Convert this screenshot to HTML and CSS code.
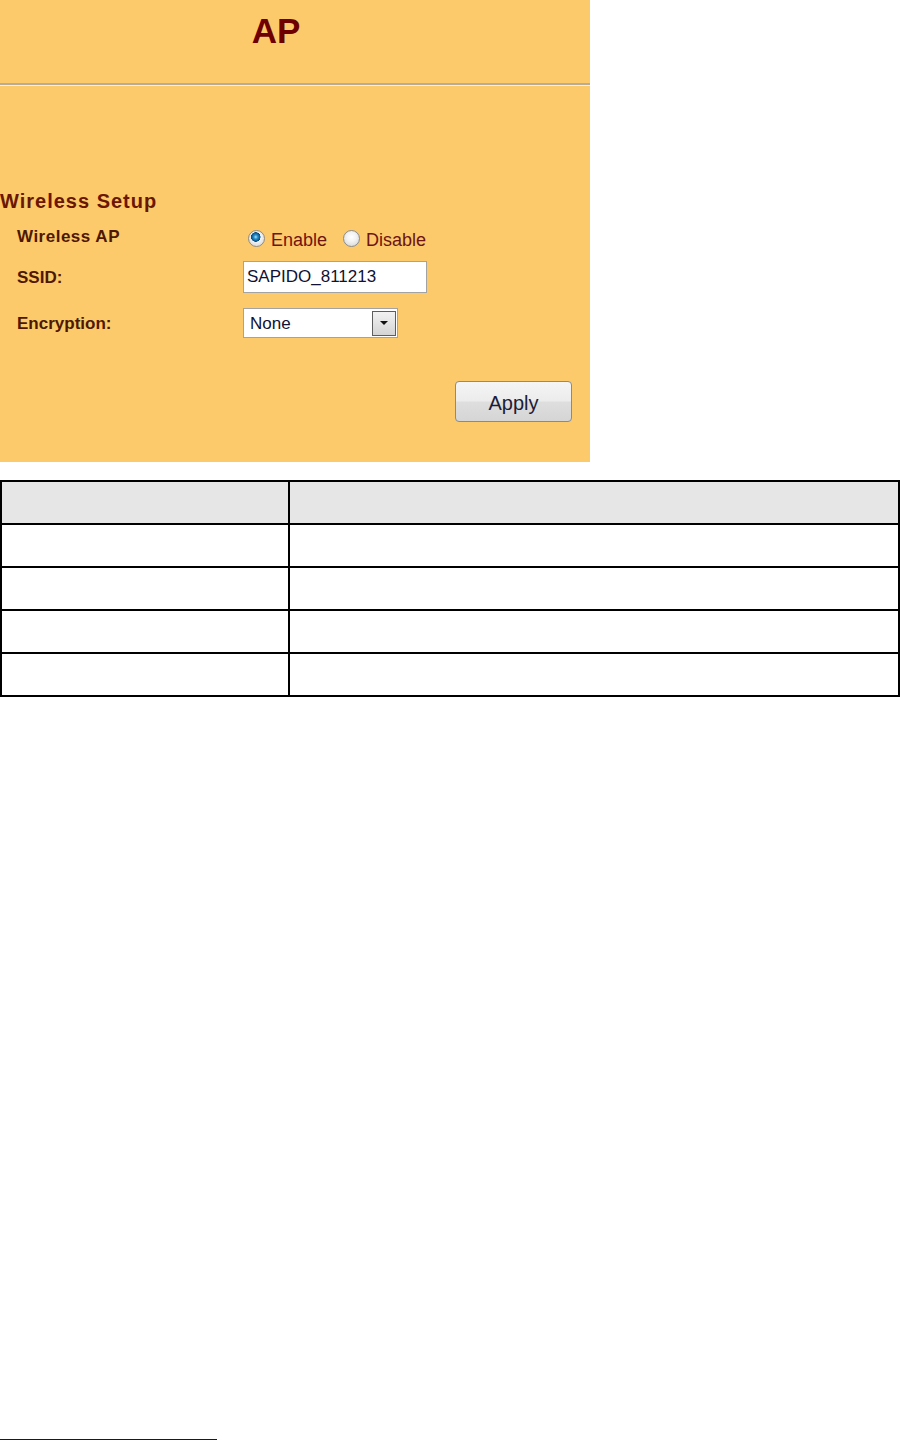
FILE: index.html
```html
<!DOCTYPE html>
<html lang="en">

<head>
    <meta charset="UTF-8">
    <meta name="viewport" content="width=device-width, initial-scale=1.0">
    <title>AP - Wireless Setup</title>
    <link rel="stylesheet" href="styles.css">
</head>

<body>
    <div class="panel">
        <div class="panel-head">
            <h1>AP</h1>
        </div>
        <hr class="divider">

        <h2 class="section-title">Wireless Setup</h2>

        <div class="form-row first-row">
            <label class="field-label">Wireless AP</label>
            <div class="radios">
                <input type="radio" name="ap" id="apOn" checked>
                <label for="apOn">Enable</label>
                <input type="radio" name="ap" id="apOff" class="second">
                <label for="apOff">Disable</label>
            </div>
        </div>

        <div class="form-row ssid-row">
            <label class="field-label" for="ssid">SSID:</label>
            <input type="text" id="ssid" class="text-input" value="SAPIDO_811213">
        </div>

        <div class="form-row enc-row">
            <label class="field-label" for="enc">Encryption:</label>
            <div class="select-box">
                <select id="enc">
                    <option>None</option>
                    <option>WEP</option>
                    <option>WPA</option>
                </select>
                <span class="arrow"></span>
            </div>
        </div>

        <div class="button-row">
            <button class="apply-button">Apply</button>
        </div>
    </div>

    <table class="info-table">
        <tr>
            <th class="col-name"></th>
            <th></th>
        </tr>
        <tr>
            <td></td>
            <td></td>
        </tr>
        <tr>
            <td></td>
            <td></td>
        </tr>
        <tr>
            <td></td>
            <td></td>
        </tr>
        <tr>
            <td></td>
            <td></td>
        </tr>
    </table>

    <div class="footnote-rule"></div>
</body>

</html>
```

FILE: styles.css
```css
body {
    margin: 0;
    min-height: 100vh;
    display: flex;
    flex-direction: column;
    background: #fff;
    font-family: 'Liberation Sans', Arial, sans-serif;
}

.panel {
    width: 590px;
    height: 462px;
    box-sizing: border-box;
    background-color: #fcca6a;
}

.panel-head {
    height: 83px;
    box-sizing: border-box;
    padding-top: 11px;
    padding-right: 38px;
    text-align: center;
}

.panel-head h1 {
    margin: 0;
    font-size: 35px;
    line-height: 40px;
    font-weight: bold;
    color: #6e0000;
}

.divider {
    margin: 0;
    height: 0;
    border: none;
    border-top: 2px solid #b5aca0;
    border-bottom: 1px solid #f3ede2;
}

.section-title {
    margin: 103px 0 0 0;
    font-size: 20px;
    line-height: 24px;
    font-weight: bold;
    letter-spacing: 1px;
    color: #6a1600;
}

.form-row {
    display: flex;
    align-items: center;
    padding-left: 17px;
}

.first-row {
    align-items: flex-start;
    margin-top: 13px;
}

.ssid-row {
    margin-top: 11px;
}

.enc-row {
    margin-top: 15px;
}

.field-label {
    width: 226px;
    flex-shrink: 0;
    font-size: 17px;
    line-height: 20px;
    font-weight: bold;
    color: #4e1800;
}

.first-row .field-label {
    padding-top: 1px;
    letter-spacing: 0.5px;
}

.ssid-row .field-label,
.enc-row .field-label {
    padding-top: 2px;
}

.radios {
    display: flex;
    align-items: center;
    margin-top: 4px;
    font-size: 18px;
    line-height: 20px;
    color: #6e1414;
}

.radios input {
    appearance: none;
    -webkit-appearance: none;
    width: 17px;
    height: 17px;
    margin: -3px 6px 0 5px;
    border: 1px solid #8c8c8c;
    border-radius: 50%;
    box-sizing: border-box;
    background: radial-gradient(circle at 50% 40%, #ffffff 0, #f2f2f2 40%, #cfcfcf 100%);
}

.radios input:checked {
    background:
        radial-gradient(circle at 45% 40%, #a8e4fb 0, #2a8fcb 2px, #0d5a92 4px, #0b4a78 4.5px, transparent 5px),
        radial-gradient(circle at 50% 40%, #ffffff 0, #f2f2f2 40%, #cfcfcf 100%);
}

.radios input.second {
    margin-left: 16px;
}

.text-input {
    width: 184px;
    height: 32px;
    box-sizing: border-box;
    padding: 0 3px;
    border: 1px solid #a3a3a3;
    background: #fff;
    font-family: 'Liberation Sans', Arial, sans-serif;
    font-size: 17px;
    color: #111133;
    outline: none;
}

.select-box {
    width: 155px;
    height: 30px;
    box-sizing: border-box;
    display: flex;
    align-items: center;
    border: 1px solid #a3a3a3;
    background: #fff;
}

.select-box select {
    appearance: none;
    -webkit-appearance: none;
    flex: 1;
    min-width: 0;
    height: 100%;
    padding: 0 0 0 6px;
    border: none;
    background: transparent;
    font-family: 'Liberation Sans', Arial, sans-serif;
    font-size: 17px;
    color: #111133;
    outline: none;
}

.arrow {
    width: 24px;
    height: 25px;
    margin-right: 1px;
    box-sizing: border-box;
    border: 1px solid #5e5e5e;
    background: linear-gradient(#f2f2f2, #d4d4d4);
    display: flex;
    justify-content: center;
    align-items: center;
}

.arrow::after {
    content: "";
    width: 0;
    height: 0;
    border-left: 4px solid transparent;
    border-right: 4px solid transparent;
    border-top: 4px solid #111;
}

.button-row {
    display: flex;
    justify-content: flex-end;
    padding-right: 18px;
    margin-top: 43px;
}

.apply-button {
    width: 117px;
    height: 41px;
    padding: 3px 0 0 0;
    border: 1px solid #8a8a8a;
    border-radius: 4px;
    background: linear-gradient(#f5f5f5 0%, #ececec 48%, #dedede 52%, #d5d5d5 100%);
    font-family: 'Liberation Sans', Arial, sans-serif;
    font-size: 20px;
    color: #1c1c3a;
    cursor: pointer;
}

.info-table {
    width: 100%;
    margin-top: 18px;
    border-collapse: collapse;
}

.info-table th,
.info-table td {
    height: 41px;
    padding: 0;
    border: 2px solid #000;
}

.info-table th {
    background-color: #e6e6e6;
}

.col-name {
    width: 286px;
}

.footnote-rule {
    margin-top: auto;
    width: 217px;
    height: 1px;
    background-color: #10106a;
}
```
